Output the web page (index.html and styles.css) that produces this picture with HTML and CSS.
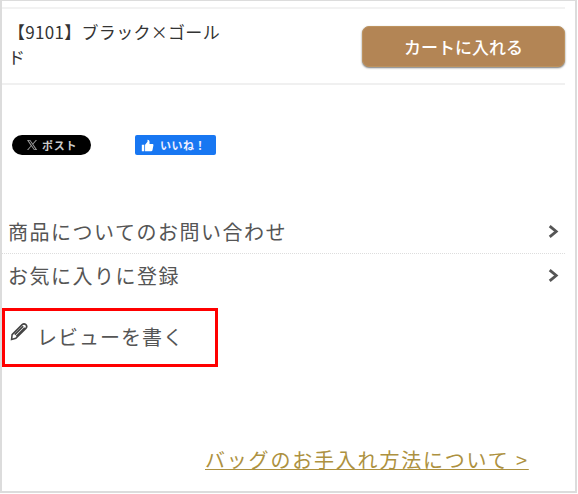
FILE: index.html
```html
<!DOCTYPE html>
<html lang="ja">
<head>
<meta charset="utf-8">
<title>商品</title>
<link rel="stylesheet" href="styles.css">
</head>
<body>
<main class="frame">
  <section class="variant">
    <p class="variant-name">【9101】ブラック×ゴールド</p>
    <a class="cart-button">カートに入れる</a>
  </section>
  <section class="share">
    <a class="x-post">
      <svg class="x-logo" viewBox="0 0 24 24"><path d="M2 2h6.500l5 6.800L19.500 2H22l-7.400 8.600L22.500 22H16l-5.400-7.400L4.500 22H2l7.500-8.700z M5.500 3.500 17 20.500h2L7.500 3.500z" fill-rule="evenodd"/></svg>
      <span>ポスト</span>
    </a>
    <a class="fb-like">
      <svg class="thumb" viewBox="0 0 16 16"><path d="M1 7h3v8H1z M5 7l3-3.500V1c1.500 0 2.500 1 2.500 2.500V6H14c1 0 1.500.8 1.300 1.700l-1.200 6c-.2.800-.8 1.300-1.600 1.300H5z"/></svg>
      <span>いいね！</span>
    </a>
  </section>
  <ul class="links">
    <li class="link-row dotted"><span>商品についてのお問い合わせ</span><svg class="chevron" viewBox="0 0 10 12"><path d="M1.500 1 7.500 6l-6 5"/></svg></li>
    <li class="link-row second"><span>お気に入りに登録</span><svg class="chevron" viewBox="0 0 10 12"><path d="M1.500 1 7.500 6l-6 5"/></svg></li>
  </ul>
  <div class="review">
    <svg class="pencil" viewBox="0 0 18 18"><path d="M2 12 11.500 2.500c1-1 2.500-1 3.500 0s1 2.500 0 3.500L5.500 15.500 1.500 16.500z M4.500 12 12.500 4M6 13.500 14 5.500"/></svg>
    <span>レビューを書く</span>
  </div>
  <div class="care"><a class="care-link">バッグのお手入れ方法について &gt;</a></div>
</main>
</body>
</html>
```
FILE: styles.css
```css
* { box-sizing: border-box; }
html, body { margin: 0; padding: 0; background: #fff; }
body {
  width: 578px;
  height: 494px;
  overflow: hidden;
  font-family: "Noto Sans CJK JP", "Noto Sans", sans-serif;
  color: #444;
}
.frame {
  width: 577px;
  height: 493px;
  border: 2px solid #dcdcdc;
  border-width: 1px 2px 2px 2px;
  padding-top: 6px;
}
.variant {
  width: 563px;
  height: 78px;
  border-top: 2px solid #f2f2f2;
  border-bottom: 2px solid #f0f0f0;
  display: flex;
  justify-content: space-between;
  padding: 10px 0 0 6px;
}
.variant-name {
  margin: 0;
  width: 218px;
  font-size: 17px;
  line-height: 25px;
  letter-spacing: .3px;
  color: #333;
}
.cart-button {
  width: 203px;
  height: 41px;
  margin-top: 7px;
  border-radius: 7px;
  background: #b38555;
  border: 1px solid #bd935f;
  box-shadow: 0 1px 2px #777;
  color: #fff;
  font-size: 17px;
  font-weight: 500;
  display: flex;
  align-items: center;
  justify-content: center;
}
.share {
  display: flex;
  align-items: center;
  height: 20px;
  margin-top: 50px;
  padding-left: 10px;
}
.x-post {
  width: 79px;
  height: 20px;
  border-radius: 10px;
  background: #000;
  color: #ccc;
  font-size: 11px;
  letter-spacing: .8px;
  font-weight: 700;
  display: flex;
  align-items: center;
  gap: 4px;
  padding-left: 14px;
}
.x-logo { width: 12px; height: 12px; fill: #999; }
.fb-like {
  width: 81px;
  height: 20px;
  margin-left: 44px;
  border-radius: 2px;
  background: #1877f2;
  color: #eef;
  font-size: 11px;
  letter-spacing: .5px;
  font-weight: 700;
  display: flex;
  align-items: center;
  gap: 6px;
  padding-left: 6px;
}
.thumb { width: 13px; height: 13px; fill: #fff; }
.links {
  list-style: none;
  margin: 55px 0 0;
  padding: 0;
  width: 563px;
}
.link-row {
  height: 44px;
  padding: 0 6px;
  display: flex;
  align-items: center;
  justify-content: space-between;
  font-size: 20px;
  letter-spacing: 1.500px;
  color: #555;
}
.dotted { border-bottom: 1px dotted #ddd; }
.second { padding-bottom: 2px; }
.chevron {
  width: 11px;
  height: 13px;
  fill: none;
  stroke: #555;
  stroke-width: 2.600;
}
.review {
  width: 216px;
  height: 59px;
  margin-top: 10px;
  margin-left: 0;
  border: 3px solid #f00;
  display: flex;
  align-items: flex-start;
  gap: 8px;
  padding: 11px 0 0 5px;
  font-size: 20px;
  letter-spacing: 1px;
  color: #555;
}
.pencil {
  width: 19px;
  height: 19px;
  fill: none;
  stroke: #444;
  stroke-width: 1.500;
  flex: none;
}
.care {
  margin-top: 81px;
  padding-left: 203px;
}
.care-link {
  font-size: 20px;
  line-height: 24px;
  letter-spacing: 1.800px;
  color: #ad9140;
  text-decoration: underline;
  text-decoration-thickness: 1px;
}
```
